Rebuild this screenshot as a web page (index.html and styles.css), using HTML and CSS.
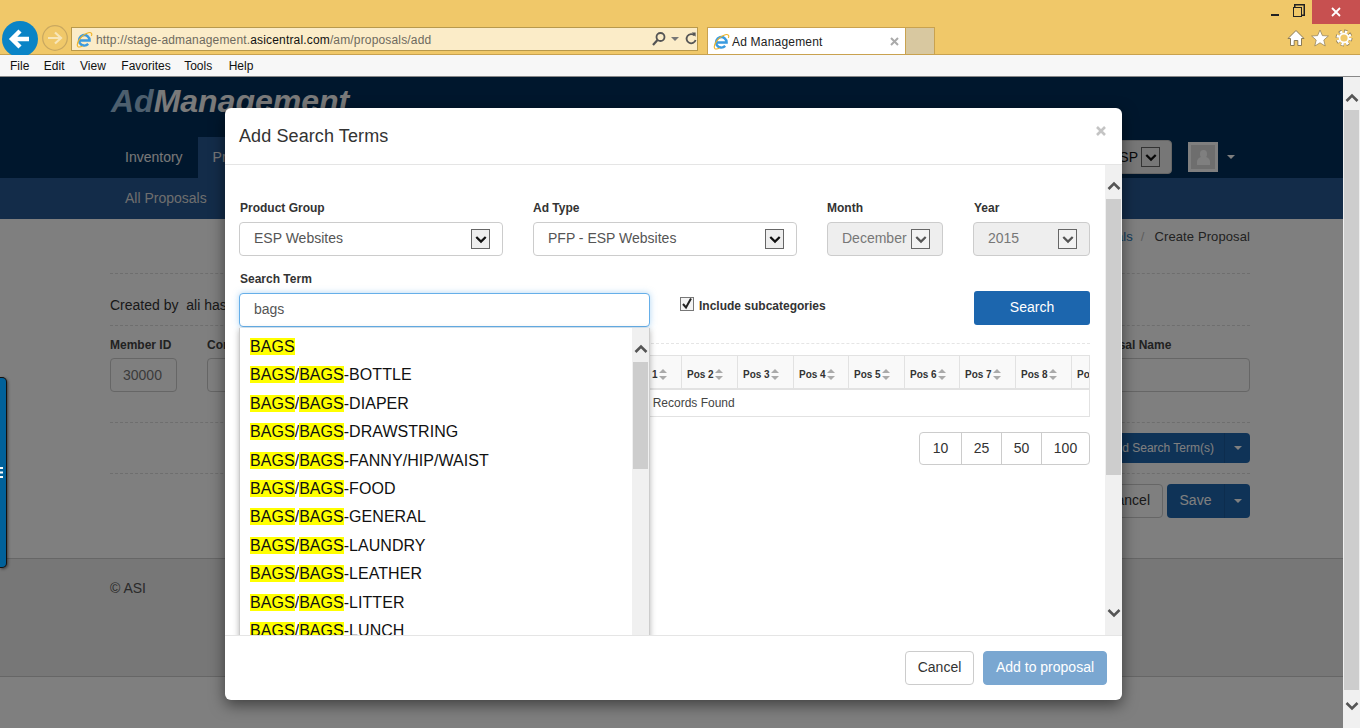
FILE: index.html
```html
<!DOCTYPE html>
<html lang="en">
<head>
  <meta charset="UTF-8">
  <title>Ad Management</title>
  <link rel="stylesheet" href="styles.css">
</head>
<body>
  <svg class="defs" width="0" height="0">
    <symbol id="chev-up" viewBox="0 0 14 10"><path d="M1.5 8 L7 2.5 L12.5 8" fill="none" stroke="currentColor" stroke-width="2.6"/></symbol>
    <symbol id="chev-down" viewBox="0 0 14 10"><path d="M1.5 2 L7 7.5 L12.5 2" fill="none" stroke="currentColor" stroke-width="2.6"/></symbol>
    <symbol id="ie" viewBox="0 0 18 18">
      <path d="M3.6 10 H14.4 A5.6 5.6 0 1 0 12.9 13.7" fill="none" stroke="#3a9be0" stroke-width="2.6"/>
      <path d="M2 16.6 C-0.6 13 6 4 13 1.8 C16 1 17.6 2.4 16.2 5.2 M2 16.6 C3.4 17.4 5.4 16.8 7 16" fill="none" stroke="#f0b429" stroke-width="1.2"/>
    </symbol>
  </svg>

  <div class="browser">
    <div class="titlebar">
      <span class="win-min"></span>
      <span class="win-restore"></span>
      <span class="win-close">
        <svg width="10" height="10" viewBox="0 0 10 10"><path d="M1 1 L9 9 M9 1 L1 9" stroke="#fff" stroke-width="1.8"/></svg>
      </span>
    </div>

    <div class="navbar">
      <svg class="btn-back" width="36" height="36" viewBox="0 0 36 36">
        <circle cx="18" cy="18" r="18" fill="#0a84c6"/>
        <path d="M27 18 H11 M18 10 L10 18 L18 26" fill="none" stroke="#fff" stroke-width="4.4"/>
      </svg>
      <svg class="btn-forward" width="26" height="26" viewBox="0 0 26 26">
        <circle cx="13" cy="13" r="12.3" fill="none" stroke="#c9a860" stroke-width="1.2"/>
        <path d="M6 13 H18 M13 7.5 L19 13 L13 18.5" fill="none" stroke="#f8e6b8" stroke-width="2.2"/>
      </svg>
      <div class="address">
        <svg class="ie-icon" width="17" height="17"><use href="#ie"/></svg>
        <span class="url">http://stage-admanagement.<b>asicentral.com</b>/am/proposals/add</span>
        <svg class="addr-search" width="16" height="16" viewBox="0 0 16 16">
          <circle cx="9.5" cy="6" r="4" fill="none" stroke="#555" stroke-width="1.8"/>
          <path d="M6.5 9 L2 14" stroke="#555" stroke-width="2.2"/>
        </svg>
        <span class="addr-caret"></span>
        <svg class="addr-refresh" width="14" height="14" viewBox="0 0 14 14">
          <path d="M10.5 3.5 A4.6 4.6 0 1 0 11.6 8" fill="none" stroke="#555" stroke-width="1.8"/>
          <path d="M7.6 0.6 H11.6 V4.8 Z" fill="#555"/>
        </svg>
      </div>
      <div class="tab">
        <svg class="ie-icon" width="17" height="17"><use href="#ie"/></svg>
        <span class="tab-title">Ad Management</span>
        <svg class="tab-x" width="9" height="9" viewBox="0 0 9 9"><path d="M1 1 L8 8 M8 1 L1 8" stroke="#aaa" stroke-width="2"/></svg>
      </div>
      <div class="tab-new"></div>
      <div class="tools">
        <svg width="18" height="18" viewBox="0 0 18 18"><path d="M9 1.5 L17 9.5 H14.5 V16.5 H10.8 V11.5 H7.2 V16.5 H3.5 V9.5 H1 Z" fill="#fff" stroke="#8a7a55"/></svg>
        <svg width="18" height="18" viewBox="0 0 18 18"><path d="M9 1 L11.4 6.6 L17.4 7 L12.8 11 L14.2 17 L9 13.8 L3.8 17 L5.2 11 L0.6 7 L6.6 6.6 Z" fill="#fff" stroke="#8a7a55" stroke-width=".7"/></svg>
        <svg width="18" height="18" viewBox="0 0 18 18">
          <circle cx="9" cy="9" r="6.6" fill="none" stroke="#8a7a55" stroke-width="3.6" stroke-dasharray="2.9 2.28"/>
          <circle cx="9" cy="9" r="6.2" fill="none" stroke="#fff" stroke-width="2.8" stroke-dasharray="2.4 2.47"/>
          <circle cx="9" cy="9" r="4.4" fill="none" stroke="#fff" stroke-width="1.6"/>
        </svg>
      </div>
    </div>

    <div class="menubar">
      <span>File</span><span>Edit</span><span>View</span><span>Favorites</span><span>Tools</span><span>Help</span>
    </div>

    <div class="page">
      <header class="site-head">
        <div class="logo"><span class="logo-ad">Ad</span>Management</div>
        <div class="site-nav">
          <a class="nav-item">Inventory</a>
          <a class="nav-item nav-active">Proposals</a>
          <div class="nav-right">
            <div class="esp-select">ESP
              <span class="sel-arrow"><svg width="12" height="9"><use href="#chev-down"/></svg></span>
            </div>
            <div class="avatar"><span class="avatar-head"></span><span class="avatar-body"></span></div>
            <span class="caret caret-user"></span>
          </div>
        </div>
      </header>
      <div class="subnav"><a>All Proposals</a></div>

      <main class="main">
        <div class="crumbs"><a>All Proposals</a><i>/</i>Create Proposal</div>
        <div class="created">Created by&nbsp; ali hassan</div>
        <div class="fields">
          <div class="field"><label>Member ID</label><div class="box box-member">30000</div></div>
          <div class="field"><label>Company</label><div class="box box-company"></div></div>
          <div class="field field-last"><label>Proposal Name</label><div class="box box-name"></div></div>
        </div>
        <div class="action-row">
          <div class="split split-small"><span class="split-text">Add Search Term(s)</span><span class="split-caret"><span class="caret"></span></span></div>
        </div>
        <div class="action-row action-save">
          <div class="btn-ghost">Cancel</div>
          <div class="split"><span class="split-text">Save</span><span class="split-caret"><span class="caret"></span></span></div>
        </div>
        <footer class="site-foot">© ASI</footer>
      </main>

      <div class="overlay"></div>

      <div class="side-tab">
        <svg width="3" height="11" viewBox="0 0 3 11"><path d="M0 1 H3 M0 5.5 H3 M0 10 H3" stroke="#fff" stroke-width="1.8"/></svg>
      </div>

      <div class="scrollbar page-scroll">
        <svg class="sb-arrow" width="14" height="10"><use href="#chev-up"/></svg>
        <div class="sb-thumb"></div>
        <svg class="sb-arrow" width="14" height="10"><use href="#chev-down"/></svg>
      </div>

      <div class="modal">
        <div class="modal-head">
          <h4>Add Search Terms</h4>
          <svg class="modal-x" width="10" height="10" viewBox="0 0 10 10"><path d="M1 1 L9 9 M9 1 L1 9" stroke="#c4c4c4" stroke-width="2.6"/></svg>
        </div>

        <div class="modal-body">
          <div class="form-row">
            <div>
              <label>Product Group</label>
              <div class="select select-first">ESP Websites<span class="sel-arrow"><svg width="12" height="9"><use href="#chev-down"/></svg></span></div>
            </div>
            <div>
              <label>Ad Type</label>
              <div class="select">PFP - ESP Websites<span class="sel-arrow"><svg width="12" height="9"><use href="#chev-down"/></svg></span></div>
            </div>
            <div>
              <label>Month</label>
              <div class="select select-off">December<span class="sel-arrow"><svg width="12" height="9"><use href="#chev-down"/></svg></span></div>
            </div>
            <div>
              <label class="label-year">Year</label>
              <div class="select select-off">2015<span class="sel-arrow"><svg width="12" height="9"><use href="#chev-down"/></svg></span></div>
            </div>
          </div>

          <label class="term-label">Search Term</label>
          <div class="search-row">
            <input class="term-input" type="text" value="bags">
            <div class="subcat">
              <svg width="14" height="14" viewBox="0 0 14 14">
                <rect x=".5" y=".5" width="13" height="13" fill="#f4f4f4" stroke="#777"/>
                <path d="M3 7 L6 10.5 L11 1.5" fill="none" stroke="#222" stroke-width="2"/>
              </svg>
              <b>Include subcategories</b>
            </div>
            <button class="btn-search">Search</button>
          </div>

          <div class="results-wrap">
            <table class="results">
              <colgroup>
                <col class="c-first"><col class="c-56"><col class="c-56"><col class="c-56"><col class="c-55"><col class="c-56"><col class="c-55"><col class="c-56"><col class="c-56"><col class="c-56">
              </colgroup>
              <tr>
                <th>Term</th>
                <th>Pos 1<span class="sort"></span></th>
                <th>Pos 2<span class="sort"></span></th>
                <th>Pos 3<span class="sort"></span></th>
                <th>Pos 4<span class="sort"></span></th>
                <th>Pos 5<span class="sort"></span></th>
                <th>Pos 6<span class="sort"></span></th>
                <th>Pos 7<span class="sort"></span></th>
                <th>Pos 8<span class="sort"></span></th>
                <th>Pos 9<span class="sort"></span></th>
              </tr>
              <tr><td colspan="10">No Records Found</td></tr>
            </table>
          </div>

          <div class="pager"><span>10</span><span>25</span><span>50</span><span>100</span></div>

          <div class="suggest">
            <div><mark>BAGS</mark></div>
            <div><mark>BAGS</mark>/<mark>BAGS</mark>-BOTTLE</div>
            <div><mark>BAGS</mark>/<mark>BAGS</mark>-DIAPER</div>
            <div><mark>BAGS</mark>/<mark>BAGS</mark>-DRAWSTRING</div>
            <div><mark>BAGS</mark>/<mark>BAGS</mark>-FANNY/HIP/WAIST</div>
            <div><mark>BAGS</mark>/<mark>BAGS</mark>-FOOD</div>
            <div><mark>BAGS</mark>/<mark>BAGS</mark>-GENERAL</div>
            <div><mark>BAGS</mark>/<mark>BAGS</mark>-LAUNDRY</div>
            <div><mark>BAGS</mark>/<mark>BAGS</mark>-LEATHER</div>
            <div><mark>BAGS</mark>/<mark>BAGS</mark>-LITTER</div>
            <div><mark>BAGS</mark>/<mark>BAGS</mark>-LUNCH</div>
            <div class="suggest-bar">
              <svg class="sb-arrow" width="14" height="10"><use href="#chev-up"/></svg>
              <div class="suggest-thumb"></div>
            </div>
          </div>

          <div class="scrollbar modal-scroll">
            <svg class="sb-arrow" width="14" height="10"><use href="#chev-up"/></svg>
            <div class="sb-thumb"></div>
            <svg class="sb-arrow" width="14" height="10"><use href="#chev-down"/></svg>
          </div>
        </div>

        <div class="modal-foot">
          <button class="btn-cancel">Cancel</button>
          <button class="btn-add">Add to proposal</button>
        </div>
      </div>
    </div>
  </div>
</body>
</html>
```

FILE: styles.css
```css
* { box-sizing: border-box; }
html, body { margin: 0; height: 100%; overflow: hidden; }
body { font-family: "Liberation Sans", Arial, sans-serif; font-size: 14px; color: #333; }
.defs { position: absolute; }
.browser { width: 1360px; height: 728px; display: flex; flex-direction: column; }

/* ie chrome */
.titlebar { height: 27px; background: #f0c869; display: flex; justify-content: flex-end; align-items: flex-start; }
.win-min { width: 8px; height: 2px; background: #222; margin: 14px 0 0 0; }
.win-restore { width: 9px; height: 10px; border: 1.5px solid #222; margin: 7px 10px 0 14px; box-shadow: 2px -2px 0 -0.5px #f0c869, 2px -2px 0 1px #222; }
.win-close { width: 48px; height: 24px; background: #c75050; display: flex; align-items: center; justify-content: center; }
.navbar { height: 28px; background: #f0c869; border-bottom: 1px solid #c9a24f; display: flex; align-items: flex-start; }
.btn-back { margin: -6px 0 0 2px; flex: none; }
.btn-forward { margin: -2px 0 0 4px; flex: none; }
.address { width: 627px; height: 24px; margin-left: 3px; background: #fbecc8; border: 1px solid #b8994c; display: flex; align-items: center; padding-left: 4px; }
.url { margin-left: 3px; padding-top: 1px; font-size: 12px; color: #6e6a5e; letter-spacing: .16px; white-space: nowrap; }
.url b { font-weight: normal; color: #111; }
.addr-search { margin-left: auto; }
.addr-caret { width: 0; height: 0; border: 4px solid transparent; border-top: 4px solid #777; border-bottom: 0; margin: 0 5px 0 4px; }
.addr-refresh { margin-right: -1px; }
.tab { width: 199px; height: 27px; margin-left: 9px; background: #fff; border: 1px solid #c9a24f; border-bottom: 0; display: flex; align-items: center; padding: 0 6px 0 5px; }
.tab-title { margin-left: 2px; padding-top: 2px; font-size: 12px; color: #222; letter-spacing: .2px; }
.tab-x { margin-left: auto; }
.tab-new { width: 29px; height: 27px; background: #d8c8a0; border: 1px solid #c9a24f; border-left: 0; border-bottom: 0; }
.tools { margin-left: auto; display: flex; gap: 6px; padding: 2px 7px 0 0; }

.menubar { height: 22px; background: #f7f7f7; border-bottom: 1px solid #888; display: flex; align-items: center; padding: 1px 0 0 10px; font-size: 12px; color: #111; gap: 14.5px; }
.menubar span:nth-child(3) { margin-left: 1px; }
.menubar span:nth-child(4) { margin-left: 1px; }
.menubar span:nth-child(5) { margin-left: -1px; }
.menubar span:nth-child(6) { margin-left: 2px; }

/* page behind the dialog */
.page { flex: 1; position: relative; overflow: hidden; background: #fff; }
.site-head { height: 101px; background: #002e5a; padding-left: 111px; display: flex; flex-direction: column; justify-content: space-between; }
.logo { font-size: 32px; font-weight: bold; font-style: italic; color: #f4f4f4; line-height: 40px; margin-top: 4px; }
.logo-ad { color: #9abedc; }
.site-nav { display: flex; height: 41px; padding-right: 125px; margin-left: -1px; }
.nav-item { padding: 0 15px; line-height: 41px; color: #f0f0f0; }
.nav-active { background: #265892; }
.nav-right { margin-left: auto; display: flex; align-items: flex-start; }
.esp-select { width: 110px; height: 34px; margin-top: 3px; background: #eee; border: 1px solid #ccc; border-radius: 4px; display: flex; align-items: center; justify-content: flex-end; gap: 3px; padding-right: 11px; color: #111; }
.avatar { width: 30px; height: 30px; margin: 5px 0 0 16px; background: #ddd; border: 3px solid #fff; position: relative; }
.avatar-head { position: absolute; left: 9px; top: 5px; width: 7px; height: 8px; border-radius: 50%; background: #fff; }
.avatar-body { position: absolute; left: 6px; top: 12px; width: 13px; height: 8px; border-radius: 5px 5px 0 0; background: #fff; }
.caret { display: inline-block; width: 0; height: 0; border: 4px solid transparent; border-top-color: #fff; border-bottom: 0; }
.caret-user { margin: 18px 0 0 9px; }
.subnav { height: 41px; background: #265892; padding-left: 125px; line-height: 41px; color: #ddd; }

.main { display: flex; flex-direction: column; }
.crumbs { margin: 9px 110px 0 0; text-align: right; font-size: 13px; letter-spacing: .1px; line-height: 18px; color: #444; }
.crumbs a { color: #2a7ab8; }
.crumbs i { font-style: normal; color: #bbb; margin: 0 10px 0 8px; }
.created { margin: 27px 110px 0 110px; border-top: 1px dashed #ddd; padding: 22px 0 0; line-height: 18px; color: #333; }
.fields { margin: 11px 110px 0 110px; border-top: 1px dashed #ddd; padding-top: 11px; display: flex; gap: 30px; }
.field label { display: block; font-size: 12px; font-weight: bold; line-height: 17px; margin-bottom: 4px; color: #444; }
.field-last { margin-left: auto; }
.box { height: 34px; border: 1px solid #ccc; border-radius: 4px; color: #777; padding: 0 12px; line-height: 32px; }
.box-member { width: 67px; }
.box-company { width: 300px; }
.box-name { width: 166px; }
.action-row { margin: 30px 110px 0 110px; border-top: 1px dashed #ddd; padding-top: 10px; display: flex; justify-content: flex-end; gap: 4px; }
.action-save { margin-top: 10px; }
.split { height: 34px; width: 83px; background: #1e66ae; border-radius: 4px; display: flex; color: #fff; }
.split-small { height: 30px; width: 200px; font-size: 12px; }
.split-text { flex: 1; text-align: center; line-height: 33px; }
.split-small .split-text { line-height: 30px; text-align: right; padding-right: 10px; }
.split-caret { width: 26px; border-left: 1px solid #1a5a9c; display: flex; align-items: center; justify-content: center; }
.btn-ghost { width: 96px; height: 34px; border: 1px solid #ccc; border-radius: 4px; background: #fff; color: #333; text-align: right; padding-right: 12px; line-height: 30px; }
.site-foot { margin-top: 40px; height: 119px; background: #eee; border-top: 1px solid #ccc; border-bottom: 1px solid #ccc; padding: 20px 0 0 110px; width: 1343px; color: #555; line-height: 18px; }

.overlay { position: absolute; inset: 0; background: rgba(0, 0, 0, .5); }
.side-tab { position: absolute; left: 0; top: 300px; width: 7px; height: 191px; background: #00619a; border: 1px solid #111; border-left: 0; border-radius: 0 5px 5px 0; box-shadow: 1px 1px 3px rgba(0, 0, 0, .5); display: flex; align-items: center; }

/* scrollbars */
.scrollbar { position: absolute; top: 0; bottom: 0; right: 0; width: 17px; background: #f0f0f0; display: flex; flex-direction: column; align-items: center; color: #555; }
.sb-thumb { width: 15px; background: #cdcdcd; flex: 1; }
.sb-arrow { flex: none; }
.page-scroll { padding: 16px 0 17px; }
.page-scroll .sb-thumb { margin: 7px 0 11px; }
.modal-scroll { padding: 16px 0 17px; }
.modal-scroll .sb-thumb { flex: none; height: 276px; margin: 8px 0 auto; }

/* dialog */
.modal { position: absolute; left: 225px; top: 31px; width: 897px; height: 592px; background: #fff; border-radius: 6px; box-shadow: 0 5px 15px rgba(0, 0, 0, .5); display: flex; flex-direction: column; overflow: hidden; }
.modal-head { height: 57px; flex: none; border-bottom: 1px solid #e5e5e5; padding: 0 15px 0 14px; display: flex; align-items: center; justify-content: space-between; }
.modal-head h4 { margin: 0; font-size: 18px; font-weight: normal; letter-spacing: .1px; color: #333; }
.modal-x { margin: -10px 1px 0 0; }
.modal-body { flex: 1; position: relative; overflow: hidden; padding: 35px 32px 0 15px; }
.modal-foot { height: 65px; flex: none; border-top: 1px solid #e5e5e5; padding-right: 15px; display: flex; justify-content: flex-end; align-items: center; gap: 9px; }
.modal-foot button { height: 34px; padding: 0 0 2px; border-radius: 4px; font: 14px "Liberation Sans", Arial, sans-serif; }
.btn-cancel { width: 69px; background: #fff; border: 1px solid #ccc; color: #333; }
.btn-add { width: 124px; background: #7aa7d1; border: 1px solid #7aa7d1; color: #fff; }

.form-row { display: grid; grid-template-columns: 263px 264px 116px 117px; column-gap: 30px; }
.modal-body label { display: block; font-size: 12px; font-weight: bold; line-height: 17px; margin-bottom: 5px; color: #333; }
.modal-body .label-year { margin-left: 1px; }
.select { height: 34px; border: 1px solid #ccc; border-radius: 4px; background: #fff; color: #555; padding: 0 0 2px 14px; display: flex; align-items: center; position: relative; }
.select-first { margin-left: -1px; }
.select-off { background: #eee; color: #777; }
.sel-arrow { width: 19px; height: 20px; background: #eee; border: 1px solid #666; color: #111; display: flex; align-items: center; justify-content: center; }
.select .sel-arrow { position: absolute; right: 12px; top: 6px; }
.select-off .sel-arrow { color: #555; background: #f2f2f2; }
.modal-body .term-label { margin-top: 15px; }
.search-row { display: flex; align-items: flex-start; border-bottom: 1px dashed #e5e5e5; padding-bottom: 16px; }
.term-input { width: 411px; height: 34px; margin-left: -1px; border: 1px solid #66afe9; border-radius: 4px; padding: 0 14px 2px; font: 14px "Liberation Sans", Arial, sans-serif; color: #555; box-shadow: 0 0 6px rgba(102, 175, 233, .5); outline: none; }
.subcat { margin: 4px 0 0 30px; height: 16px; display: flex; align-items: flex-start; gap: 5px; font-size: 12px; line-height: 17px; color: #333; }
.subcat b { margin-top: 1px; }
.btn-search { width: 116px; height: 34px; margin: -2px 0 0 auto; padding: 0 0 2px; background: #1c66ae; border: 0; border-radius: 3px; color: #fff; font: 14px "Liberation Sans", Arial, sans-serif; }

.results-wrap { margin-top: 11px; width: 850px; overflow: hidden; border-right: 1px solid #e2e2e2; }
.results { width: 887px; table-layout: fixed; border-collapse: collapse; }
.c-first { width: 385px; }
.c-56 { width: 56px; }
.c-55 { width: 55px; }
.results th { height: 33px; background: #f9f9f9; border: 1px solid #e2e2e2; border-bottom: 2px solid #e2e2e2; font-size: 10px; text-align: left; padding: 5px 0 0 5px; color: #333; white-space: nowrap; overflow: hidden; }
.results td { height: 28px; border: 1px solid #e2e2e2; font-size: 12px; padding: 1px 0 0 393px; color: #444; }
.sort { display: inline-block; width: 8px; height: 9px; margin-left: 1px; vertical-align: -1px; position: relative; }
.sort::before, .sort::after { content: ""; position: absolute; left: 0; border: 4px solid transparent; }
.sort::before { top: -1px; border-top: 0; border-bottom-color: #aaa; }
.sort::after { bottom: -1px; border-bottom: 0; border-top-color: #aaa; }

.pager { margin: 15px 0 0 auto; width: 171px; height: 33px; display: flex; border: 1px solid #ccc; border-radius: 4px; }
.pager span { flex: none; width: 40px; text-align: center; line-height: 31px; border-left: 1px solid #ccc; color: #333; }
.pager span:first-child { width: 41px; border-left: 0; }
.pager span:last-child { width: 48px; }

.suggest { position: absolute; left: 14px; top: 163px; width: 411px; height: 400px; background: #fff; border: 1px solid #ccc; border-top: 0; box-shadow: 0 2px 6px rgba(0, 0, 0, .3); padding: 5px 0 0 10px; font-size: 16px; letter-spacing: .04px; color: #111; }
.suggest > div { height: 28.4px; line-height: 28px; }
.suggest mark { background: #ff0; color: #111; }
.suggest-bar { position: absolute; right: 0; top: 0; bottom: 0; width: 17px; height: auto !important; background: #f0f0f0; display: flex; flex-direction: column; align-items: center; color: #555; padding-top: 16px; }
.suggest-thumb { width: 15px; height: 107px; background: #cdcdcd; margin-top: 8px; }
```
